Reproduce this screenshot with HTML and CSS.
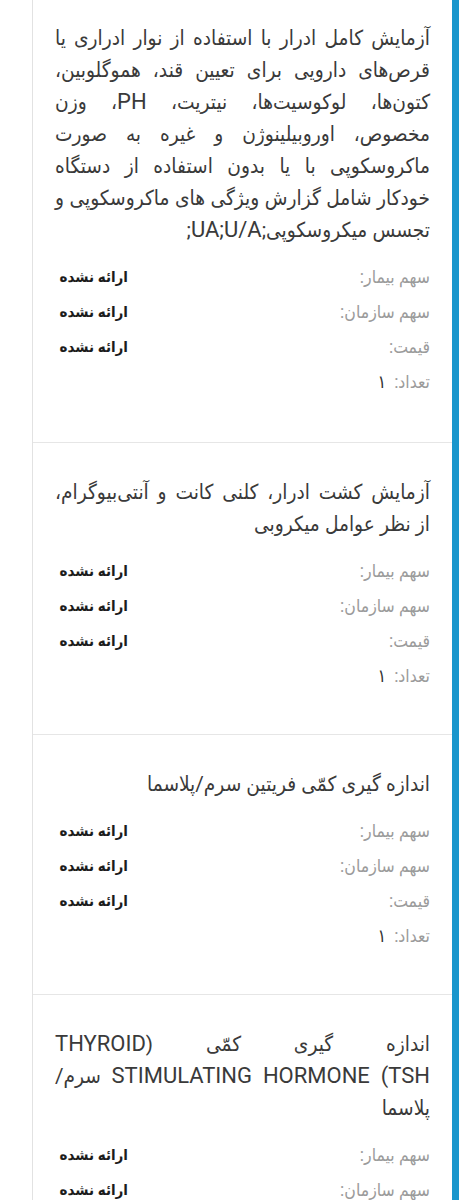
FILE: index.html
```html
<!DOCTYPE html>
<html lang="fa" dir="rtl">
<head>
    <meta charset="UTF-8">
    <meta name="viewport" content="width=device-width, initial-scale=1.0">
    <title>خدمات</title>
    <link rel="stylesheet" href="styles.css">
</head>
<body>
    <div class="list">
        <div class="item">
            <p class="title">آزمایش کامل ادرار با استفاده از نوار ادراری یا قرص‌های دارویی برای تعیین قند، هموگلوبین، کتون‌ها، لوکوسیت‌ها، نیتریت، <span class="en">PH</span>، وزن مخصوص، اوروبیلینوژن و غیره به صورت ماکروسکوپی با یا بدون استفاده از دستگاه خودکار شامل گزارش ویژگی های ماکروسکوپی و تجسس میکروسکوپی;<span class="en">UA;U/A</span>;</p>
            <div class="row"><span class="label">سهم بیمار:</span><span class="value">ارائه نشده</span></div>
            <div class="row"><span class="label">سهم سازمان:</span><span class="value">ارائه نشده</span></div>
            <div class="row"><span class="label">قیمت:</span><span class="value">ارائه نشده</span></div>
            <div class="row"><span class="label">تعداد:</span><span class="count">۱</span></div>
        </div>
        <div class="item">
            <p class="title">آزمایش کشت ادرار، کلنی کانت و آنتی‌بیوگرام، از&nbsp;نظر عوامل میکروبی</p>
            <div class="row"><span class="label">سهم بیمار:</span><span class="value">ارائه نشده</span></div>
            <div class="row"><span class="label">سهم سازمان:</span><span class="value">ارائه نشده</span></div>
            <div class="row"><span class="label">قیمت:</span><span class="value">ارائه نشده</span></div>
            <div class="row"><span class="label">تعداد:</span><span class="count">۱</span></div>
        </div>
        <div class="item">
            <p class="title">اندازه گیری کمّی فریتین سرم/پلاسما</p>
            <div class="row"><span class="label">سهم بیمار:</span><span class="value">ارائه نشده</span></div>
            <div class="row"><span class="label">سهم سازمان:</span><span class="value">ارائه نشده</span></div>
            <div class="row"><span class="label">قیمت:</span><span class="value">ارائه نشده</span></div>
            <div class="row"><span class="label">تعداد:</span><span class="count">۱</span></div>
        </div>
        <div class="item">
            <p class="title">اندازه گیری کمّی (<span class="en">THYROID STIMULATING HORMONE (TSH</span> سرم/پلاسما</p>
            <div class="row"><span class="label">سهم بیمار:</span><span class="value">ارائه نشده</span></div>
            <div class="row"><span class="label">سهم سازمان:</span><span class="value">ارائه نشده</span></div>
            <div class="row"><span class="label">قیمت:</span><span class="value">ارائه نشده</span></div>
            <div class="row"><span class="label">تعداد:</span><span class="count">۱</span></div>
        </div>
    </div>
</body>
</html>
```

FILE: styles.css
```css
body {
    font-family: Roboto, "DejaVu Sans Condensed", "DejaVu Sans", sans-serif;
    background-color: #ffffff;
    margin: 0;
    padding: 0 0 0 32px;
}
.list {
    border-left: 1px solid #e2e2e2;
    border-right: 7px solid #1a96cc;
}
.item {
    padding: 33px 22px 41px;
    border-bottom: 1px solid #e6e6e6;
}
.item:first-child {
    padding-top: 22px;
    padding-bottom: 43px;
}
.title {
    margin: 0 0 13px;
    font-size: 20.7px;
    line-height: 32px;
    color: #3a3a3a;
    text-align: justify;
}
.title .en {
    font-size: 22px;
}
.row {
    display: flex;
    align-items: center;
    height: 35px;
    font-size: 17.5px;
}
.label {
    color: #9b9b9b;
}
.value {
    margin-right: auto;
    width: 73px;
    font-size: 15px;
    font-weight: bold;
    color: #1c1c1c;
    white-space: nowrap;
}
.count {
    margin-right: 8px;
    color: #333333;
    font-size: 18px;
}
```
